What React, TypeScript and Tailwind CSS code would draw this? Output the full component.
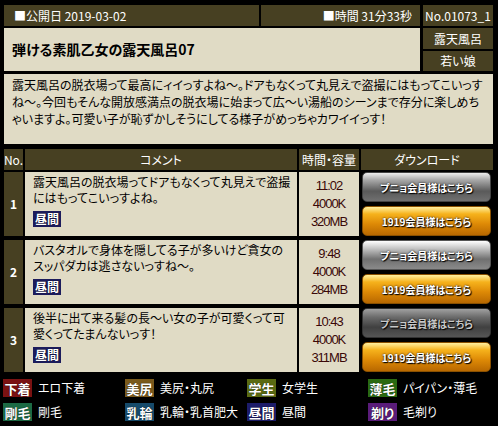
import React from "react";

const OL = "bg-[#474022]";
const BG = "bg-[#e0dbc5]";

function Badge({ text, cls }: { text: string; cls: string }) {
  return (
    <span
      className={`inline-flex items-center justify-center h-[18px] w-[29px] text-[13px] leading-none font-bold text-white [text-shadow:0_0_1px_#000] ${cls}`}
    >
      {text}
    </span>
  );
}

function Btn({ label, kind }: { label: string; kind: "gray" | "gray2" | "dim" | "orange" }) {
  const bg =
    kind === "orange"
      ? "bg-[linear-gradient(to_bottom,#fff0a0_0%,#f6b21c_25%,#de8a06_60%,#b86800_100%)] border-[#8a5000]"
      : kind === "dim"
      ? "bg-[linear-gradient(to_bottom,#a0a0a0_0%,#6a6a6a_30%,#404040_65%,#555_100%)] border-[#333]"
      : kind === "gray2"
      ? "bg-[linear-gradient(to_bottom,#ffffff_0%,#c8c8c8_25%,#707070_65%,#8a8a8a_100%)] border-[#555]"
      : "bg-[linear-gradient(to_bottom,#eeeeee_0%,#a8a8a8_25%,#5a5a5a_65%,#707070_100%)] border-[#444]";
  const tc = kind === "dim" ? "text-[#c8c8c8]" : "text-white";
  return (
    <div
      className={`h-[30px] w-[129px] rounded-[5px] border flex items-center justify-center text-[10px] font-bold ${tc} [text-shadow:1px_1px_1px_#000,0_0_2px_#000] ${bg}`}
    >
      {label}
    </div>
  );
}

function Row({
  no,
  lines,
  time,
  size,
  gray,
}: {
  no: string;
  lines: string[];
  time: string;
  size: string;
  gray?: "gray" | "gray2" | "dim";
}) {
  return (
    <div className="flex gap-[2px] h-[64px]">
      <div className={`w-[19px] ${OL} flex items-center justify-center text-white font-bold text-[12px]`}>{no}</div>
      <div className={`w-[272px] ${BG} pl-[8px] pt-[2px] flex flex-col`}>
        <div className="text-[12px] leading-[16px] text-black whitespace-nowrap">
          {lines.map((l, i) => (
            <div key={i}>{l}</div>
          ))}
        </div>
        <div className="mt-[5px] flex">
          <span className="inline-flex items-center justify-center h-[16px] w-[28px] bg-[#1c1c5c] text-white font-bold text-[12px] leading-none [text-shadow:0_0_1px_#000]">
            昼間
          </span>
        </div>
      </div>
      <div
        className={`w-[60px] ${BG} flex flex-col items-center justify-center font-['Liberation_Sans',sans-serif] text-[13px] leading-[18px] tracking-[-1px] text-[#3a0808]`}
      >
        <div>{time}</div>
        <div>4000K</div>
        <div>{size}</div>
      </div>
      <div className="flex-1 flex flex-col gap-[4px] pl-[1px]">
        <Btn label="プニョ会員様はこちら" kind={gray ?? "gray"} />
        <Btn label="1919会員様はこちら" kind="orange" />
      </div>
    </div>
  );
}

export default function App() {
  const legend: [string, string, string][] = [
    ["下着", "エロ下着", "bg-[#7a1212]"],
    ["美尻", "美尻・丸尻", "bg-[#7a5a1c]"],
    ["学生", "女学生", "bg-[#5a6a12]"],
    ["薄毛", "パイパン・薄毛", "bg-[#2a6a12]"],
    ["剛毛", "剛毛", "bg-[#1c6a44]"],
    ["乳輪", "乳輪・乳首肥大", "bg-[#164a6a]"],
    ["昼間", "昼間", "bg-[#1c1c6a]"],
    ["剃り", "毛剃り", "bg-[#5a1c7a]"],
  ];
  return (
    <div className="w-[498px] h-[426px] bg-black pl-[4px] pt-[5px] font-['Noto_Sans_CJK_JP',sans-serif] [font-feature-settings:'palt'] overflow-hidden">
      <div className="w-[489px]">
        {/* top */}
        <div className="flex gap-[3px]">
          <div className="flex-1 flex flex-col gap-[2px]">
            <div className="flex gap-[2px] h-[21px]">
              <div className={`w-[255px] ${OL} text-white text-[12px] flex items-center pl-[10px]`}>■公開日 2019-03-02</div>
              <div className={`flex-1 ${OL} text-white text-[12px] flex items-center justify-end pr-[8px]`}>■時間 31分33秒</div>
            </div>
            <div className={`h-[43px] ${BG} flex items-center pl-[8px] text-[14px] font-bold text-black`}>
              弾ける素肌乙女の露天風呂07
            </div>
          </div>
          <div className="w-[70px] flex flex-col gap-[2px]">
            <div className={`h-[21px] ${OL} text-white text-[12px] flex items-center justify-center`}>No.01073_1</div>
            <div className={`h-[21px] ${OL} text-white text-[12px] flex items-center justify-center`}>露天風呂</div>
            <div className={`h-[20px] ${OL} text-white text-[12px] flex items-center justify-center`}>若い娘</div>
          </div>
        </div>
        {/* description */}
        <div className={`mt-[3px] h-[70px] ${BG} pl-[8px] pt-[2px] text-[12px] leading-[17px] text-black whitespace-nowrap`}>
          <div>露天風呂の脱衣場って最高にィイっすよね〜。ドアもなくって丸見えで盗撮にはもってこいっす</div>
          <div>ね〜。今回もそんな開放感満点の脱衣場に始まって広〜い湯船のシーンまで存分に楽しめち</div>
          <div>ゃいますよ。可愛い子が恥ずかしそうにしてる様子がめっちゃカワイイっす！</div>
        </div>
        {/* table header */}
        <div className="mt-[5px] flex gap-[2px] h-[21px] text-white text-[12px]">
          <div className={`w-[19px] ${OL} flex items-center justify-center`}>No.</div>
          <div className={`w-[272px] ${OL} flex items-center justify-center`}>コメント</div>
          <div className={`w-[60px] ${OL} flex items-center justify-center`}>時間・容量</div>
          <div className={`flex-1 ${OL} flex items-center justify-center`}>ダウンロード</div>
        </div>
        <div className="mt-[2px] flex flex-col gap-[4px]">
          <Row
            no="1"
            lines={["露天風呂の脱衣場ってドアもなくって丸見えで盗撮", "にはもってこいっすよね。"]}
            time="11:02"
            size="320MB"
            gray="gray"
          />
          <Row
            no="2"
            lines={["バスタオルで身体を隠してる子が多いけど貪女の", "スッパダカは逃さないっすね〜。"]}
            time="9:48"
            size="284MB"
            gray="gray2"
          />
          <Row
            no="3"
            lines={["後半に出て来る髪の長〜い女の子が可愛くって可", "愛くってたまんないっす！"]}
            time="10:43"
            size="311MB"
            gray="dim"
          />
        </div>
        {/* legend */}
        <div className="mt-[7px] grid grid-cols-[122px_122px_121px_1fr] gap-y-[6px] -ml-[1px]">
          {legend.map(([b, t, c], i) => (
            <div key={i} className="flex items-center gap-[6px]">
              <Badge text={b} cls={c} />
              <span className="text-white text-[12px]">{t}</span>
            </div>
          ))}
        </div>
      </div>
    </div>
  );
}
